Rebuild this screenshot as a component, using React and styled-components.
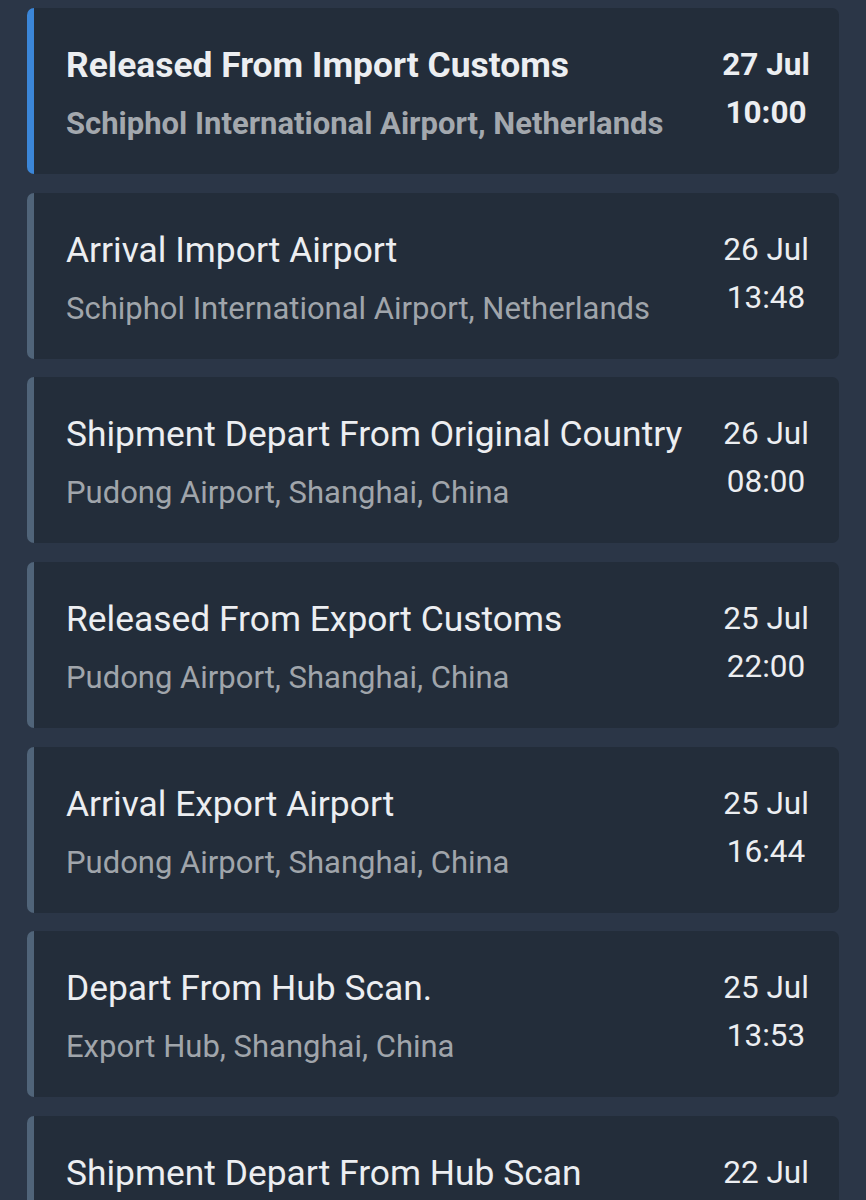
import React from 'react';
import styled, { createGlobalStyle } from 'styled-components';

const events = [
  { title: 'Released From Import Customs', place: 'Schiphol International Airport, Netherlands', date: '27 Jul', time: '10:00', current: true },
  { title: 'Arrival Import Airport', place: 'Schiphol International Airport, Netherlands', date: '26 Jul', time: '13:48' },
  { title: 'Shipment Depart From Original Country', place: 'Pudong Airport, Shanghai, China', date: '26 Jul', time: '08:00' },
  { title: 'Released From Export Customs', place: 'Pudong Airport, Shanghai, China', date: '25 Jul', time: '22:00' },
  { title: 'Arrival Export Airport', place: 'Pudong Airport, Shanghai, China', date: '25 Jul', time: '16:44' },
  { title: 'Depart From Hub Scan.', place: 'Export Hub, Shanghai, China', date: '25 Jul', time: '13:53' },
  { title: 'Shipment Depart From Hub Scan', place: 'Export Hub, Shanghai, China', date: '22 Jul', time: '19:20' },
];

export default function App() {
  return (
    <>
      <GlobalStyle />
      <Page>
        {events.map(ev => (
          <Card key={ev.title} current={ev.current}>
            <Info>
              <Title current={ev.current}>{ev.title}</Title>
              <Place current={ev.current}>{ev.place}</Place>
            </Info>
            <When current={ev.current}>
              <span>{ev.date}</span>
              <span>{ev.time}</span>
            </When>
          </Card>
        ))}
      </Page>
    </>
  );
}

const GlobalStyle = createGlobalStyle`
  html, body {
    margin: 0;
    background: #2b3647;
    font-family: Roboto, "Noto Sans", sans-serif;
    overflow: hidden;
  }
`;

const Page = styled.div`
  display: flex;
  flex-direction: column;
  gap: 18.67px;
  padding: 8px 27px 0 27px;
  height: 1200px;
  box-sizing: border-box;
`;

const Card = styled.div.withConfig({ shouldForwardProp: p => p !== 'current' })`
  display: flex;
  align-items: flex-start;
  flex-shrink: 0;
  height: 166px;
  box-sizing: border-box;
  background: #232d3a;
  border-left: 7px solid ${props => (props.current ? '#3b86d8' : '#506479')};
  border-radius: 7px;
  padding: 34px 13px 0 32px;
`;

const Info = styled.div`
  flex: 1;
  display: flex;
  flex-direction: column;
  gap: 13px;
  min-width: 0;
`;

const Title = styled.div.withConfig({ shouldForwardProp: p => p !== 'current' })`
  font-size: 35.4px;
  line-height: 46px;
  color: #eceef1;
  font-weight: ${props => (props.current ? 700 : 400)};
  white-space: nowrap;
`;

const Place = styled.div.withConfig({ shouldForwardProp: p => p !== 'current' })`
  font-size: 31px;
  line-height: 46px;
  color: ${props => (props.current ? '#a3a8ae' : '#a0a5ab')};
  font-weight: ${props => (props.current ? 700 : 400)};
  white-space: nowrap;
`;

const When = styled.div.withConfig({ shouldForwardProp: p => p !== 'current' })`
  width: 120px;
  display: flex;
  flex-direction: column;
  align-items: center;
  font-size: 31.5px;
  line-height: 48px;
  margin-top: -1px;
  color: #eceef1;
  font-weight: ${props => (props.current ? 700 : 400)};
`;
